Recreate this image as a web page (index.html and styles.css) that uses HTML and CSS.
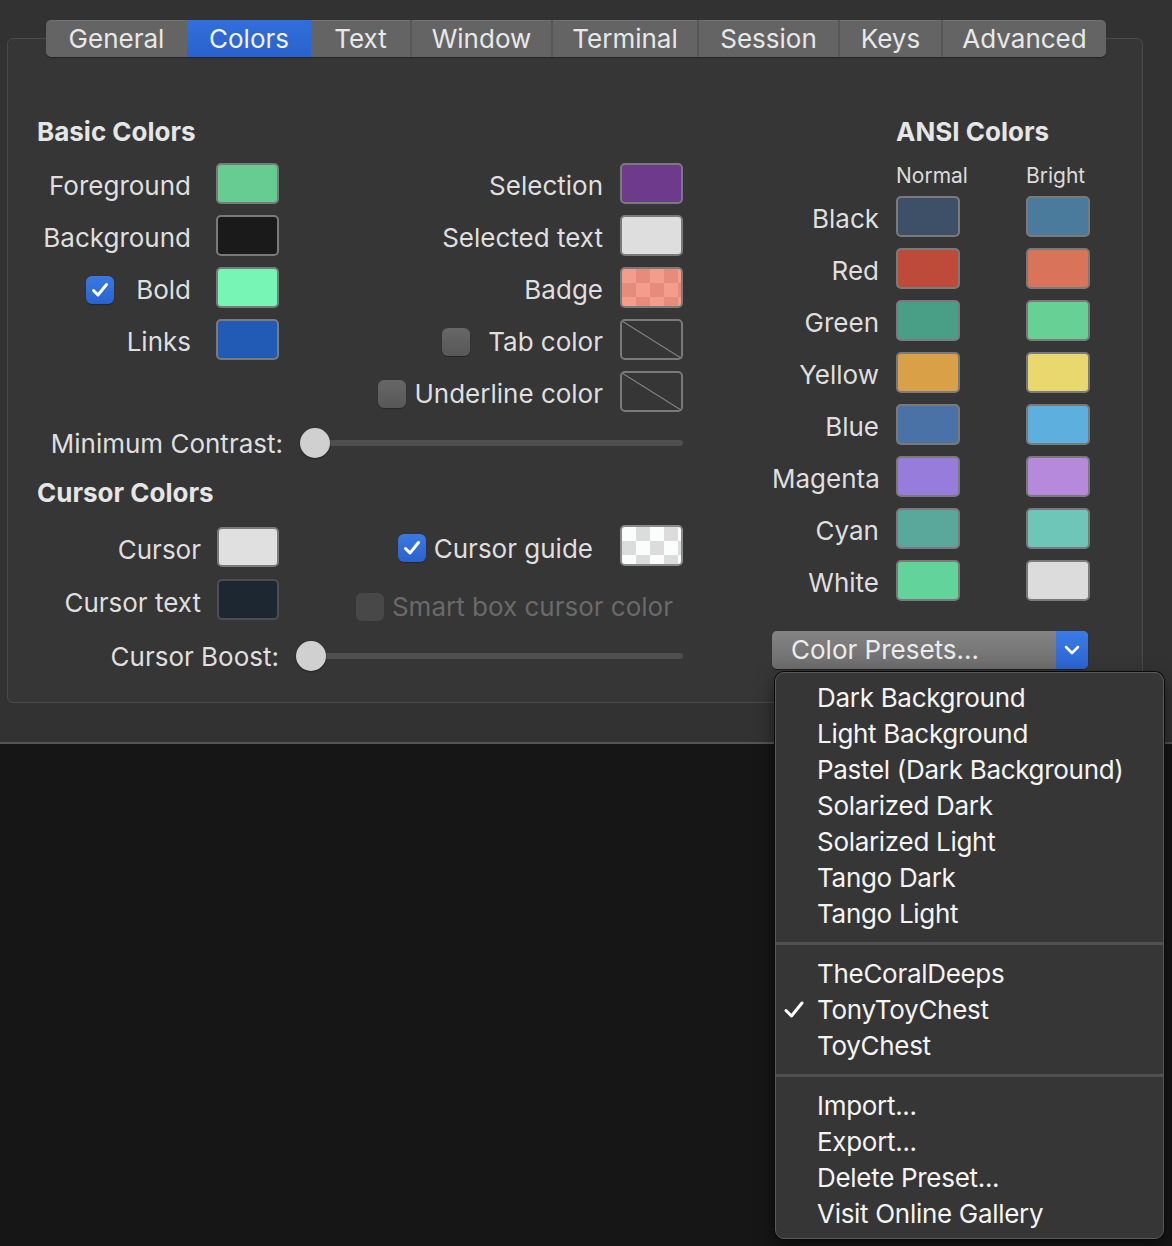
FILE: index.html
```html
<!DOCTYPE html>
<html>
<head>
<meta charset="utf-8">
<link rel="stylesheet" href="styles.css">
</head>
<body>
<div class="window">
  <div class="tabs">
    <div class="tab">General</div>
    <div class="tab active">Colors</div>
    <div class="tab nosep">Text</div>
    <div class="tab">Window</div>
    <div class="tab">Terminal</div>
    <div class="tab">Session</div>
    <div class="tab">Keys</div>
    <div class="tab">Advanced</div>
  </div>
  <div class="panel">
    <div class="left">
      <div class="title">Basic Colors</div>
      <div class="basic-grid">
        <div class="lbl1">Foreground</div><div class="sw c-fg"></div>
        <div class="lbl2">Selection</div><div class="sw c-sel"></div>

        <div class="lbl1">Background</div><div class="sw c-bg"></div>
        <div class="lbl2">Selected text</div><div class="sw c-seltext"></div>

        <div class="lbl1 withbox"><span class="cb on"><svg viewBox="0 0 28 28"><path d="M7.5 14.5 L12 19 L20.5 8.5" fill="none" stroke="#fff" stroke-width="3" stroke-linecap="round" stroke-linejoin="round"/></svg></span><span>Bold</span></div><div class="sw c-bold"></div>
        <div class="lbl2">Badge</div><div class="sw c-badge"></div>

        <div class="lbl1">Links</div><div class="sw c-links"></div>
        <div class="lbl2 withbox gap-tab"><span class="cb"></span><span>Tab color</span></div><div class="sw none"></div>

        <div class="lbl1"></div><div></div>
        <div class="lbl2 withbox gap-ul"><span class="cb"></span><span>Underline color</span></div><div class="sw none"></div>
      </div>
      <div class="slider-row contrast">
        <div class="slabel">Minimum Contrast:</div>
        <div class="slider"><span class="knob"></span><span class="track"></span></div>
      </div>
      <div class="title second">Cursor Colors</div>
      <div class="cursor-grid">
        <div class="lbl1">Cursor</div><div class="sw c-cursor"></div>
        <div class="right-cell"><span class="cb on"><svg viewBox="0 0 28 28"><path d="M7.5 14.5 L12 19 L20.5 8.5" fill="none" stroke="#fff" stroke-width="3" stroke-linecap="round" stroke-linejoin="round"/></svg></span><span class="guide-label">Cursor guide</span><span class="sw c-guide"></span></div>
        <div class="lbl1">Cursor text</div><div class="sw c-ctext"></div>
        <div class="right-cell smart"><span class="cb dis"></span><span>Smart box cursor color</span></div>
      </div>
      <div class="slider-row boost">
        <div class="slabel">Cursor Boost:</div>
        <div class="slider"><span class="knob"></span><span class="track"></span></div>
      </div>
    </div>
    <div class="right">
      <div class="ansi-grid">
        <div class="atitle">ANSI Colors</div>
        <div class="sub n">Normal</div>
        <div class="sub b">Bright</div>

        <div class="alabel">Black</div><div class="sw a1 k0"></div><div class="sw a2 k8"></div>
        <div class="alabel">Red</div><div class="sw a1 k1"></div><div class="sw a2 k9"></div>
        <div class="alabel">Green</div><div class="sw a1 k2"></div><div class="sw a2 k10"></div>
        <div class="alabel">Yellow</div><div class="sw a1 k3"></div><div class="sw a2 k11"></div>
        <div class="alabel">Blue</div><div class="sw a1 k4"></div><div class="sw a2 k12"></div>
        <div class="alabel">Magenta</div><div class="sw a1 k5"></div><div class="sw a2 k13"></div>
        <div class="alabel">Cyan</div><div class="sw a1 k6"></div><div class="sw a2 k14"></div>
        <div class="alabel">White</div><div class="sw a1 k7"></div><div class="sw a2 k15"></div>
      </div>
      <div class="popup">
        <span class="popup-text">Color Presets...</span>
        <span class="popup-arrow"><svg viewBox="0 0 32 38" width="32" height="38"><path d="M10 16 L16 22 L22 16" fill="none" stroke="#fff" stroke-width="2.6" stroke-linecap="round" stroke-linejoin="round"/></svg></span>
      </div>
    </div>
  </div>
</div>
<div class="menu">
  <div class="item">Dark Background</div>
  <div class="item">Light Background</div>
  <div class="item">Pastel (Dark Background)</div>
  <div class="item">Solarized Dark</div>
  <div class="item">Solarized Light</div>
  <div class="item">Tango Dark</div>
  <div class="item">Tango Light</div>
  <div class="sep"></div>
  <div class="item">TheCoralDeeps</div>
  <div class="item checked"><span class="check"><svg viewBox="0 0 22 22" width="22" height="22"><path d="M3 11.5 L8.5 17 L19 4" fill="none" stroke="#fff" stroke-width="3" stroke-linecap="round" stroke-linejoin="round"/></svg></span>TonyToyChest</div>
  <div class="item">ToyChest</div>
  <div class="sep"></div>
  <div class="item">Import...</div>
  <div class="item">Export...</div>
  <div class="item">Delete Preset...</div>
  <div class="item">Visit Online Gallery</div>
</div>
</body>
</html>
```
FILE: styles.css
```css
* { box-sizing: border-box; }
html, body { margin: 0; padding: 0; }
body {
  width: 1172px;
  height: 1246px;
  background: #161616;
  font-family: Inter, "Noto Sans", "Liberation Sans", sans-serif;
  font-size: 26px;
  color: #dfdfdf;
  overflow: hidden;
  position: relative;
}
.window {
  height: 744px;
  background: #323232;
  border-bottom: 2px solid #555;
  padding-top: 20px;
}
.tabs {
  position: relative;
  z-index: 2;
  margin-left: 46px;
  width: 1060px;
  height: 37px;
  display: grid;
  grid-template-columns: 141px 124px 99px 141px 146px 141px 103px 165px;
  background: #646464;
  border-radius: 5px;
  box-shadow: 0 1px 1px rgba(0,0,0,0.35), inset 0 1px 0 rgba(255,255,255,0.08);
  overflow: hidden;
}
.tab {
  text-align: center;
  line-height: 37px;
  color: #e8e8e8;
  border-left: 2px solid #575757;
}
.tab:first-child, .tab.nosep, .tab.active { border-left: none; }
.tab.active {
  background: linear-gradient(#316fdc, #2a62cc);
  color: #f2f2f2;
}
.panel {
  margin-left: 7px;
  margin-top: -19px;
  width: 1136px;
  height: 665px;
  border: 1px solid #4a4a4a;
  border-radius: 6px;
  background: #363636;
  display: flex;
  padding: 78px 0 0 29px;
}
.left { width: 646px; }
.title {
  font-weight: 700;
  line-height: 30px;
  height: 30px;
  color: #e6e6e6;
}
.title.second { margin-top: 9px; }
.basic-grid {
  margin-top: 10px;
  display: grid;
  grid-template-columns: 179px 63px 341px 63px;
  grid-auto-rows: 52px;
  align-items: center;
}
.lbl1, .lbl2, .alabel, .right-cell { padding-top: 5px; }
.lbl1 { text-align: right; padding-right: 25px; white-space: nowrap; }
.lbl2 { text-align: right; padding-right: 17px; white-space: nowrap; }
.withbox { display: flex; justify-content: flex-end; align-items: center; gap: 22px; }
.gap-tab { gap: 18px; }
.gap-ul { gap: 8px; }
.sw {
  display: block;
  width: 63px;
  height: 41px;
  border: 2px solid #7a7a7a;
  border-radius: 5px;
}
.c-fg { background: #66cc92; }
.c-bg { background: #1a1a1a; }
.c-bold { background: #76f5b4; }
.c-links { background: #215bb5; }
.c-sel { background: #6e3a8c; }
.c-seltext { background: #dedede; }
.c-badge {
  background-color: #f49d8d;
  background-image:
    linear-gradient(45deg, #e78b7d 25%, transparent 25%, transparent 75%, #e78b7d 75%),
    linear-gradient(45deg, #e78b7d 25%, transparent 25%, transparent 75%, #e78b7d 75%);
  background-size: 28px 28px;
  background-position: 0 0, 14px 14px;
}
.sw.none {
  background: linear-gradient(to top right, transparent calc(50% - 1px), #8a8a8a 50%, transparent calc(50% + 1px));
}
.c-cursor { background: #e0e0e0; height: 40px; }
.c-ctext { background: #1d2731; border-color: #4d4d4d; }
.c-guide {
  background-color: #fbfdfd;
  background-image:
    linear-gradient(45deg, #dcdcdc 25%, transparent 25%, transparent 75%, #dcdcdc 75%),
    linear-gradient(45deg, #dcdcdc 25%, transparent 25%, transparent 75%, #dcdcdc 75%);
  background-size: 28px 28px;
  background-position: 0 0, 14px 14px;
  border-color: #8a8a8a;
}
.cb {
  width: 28px;
  height: 28px;
  border-radius: 6px;
  background: linear-gradient(#676767, #575757);
  box-shadow: 0 1px 1px rgba(0,0,0,0.3);
  display: inline-block;
  flex: none;
}
.cb svg { width: 28px; height: 28px; display: block; }
.cb.on { background: linear-gradient(#3a79e2, #2a62cc); }
.cb.dis { background: #484848; box-shadow: none; }

.slider-row { display: flex; align-items: center; height: 46px; }
.contrast { height: 52px; }
.slabel { text-align: right; white-space: nowrap; padding-top: 1px; }
.contrast .slabel { width: 246px; }
.contrast .slider { margin-left: 17px; width: 383px; }
.boost { margin-top: 7px; }
.boost .slabel { width: 242px; }
.boost .slider { margin-left: 17px; width: 387px; }
.slider { display: flex; align-items: center; height: 30px; }
.knob {
  width: 30px; height: 30px; border-radius: 50%;
  background: #d0d0d0;
  box-shadow: 0 1px 2px rgba(0,0,0,0.4);
  flex: none;
  position: relative;
  z-index: 1;
}
.track {
  flex: 1;
  height: 6px;
  margin-left: -15px;
  background: #4f4f4f;
  border-radius: 3px;
}
.cursor-grid {
  margin-top: 12px;
  display: grid;
  grid-template-columns: 180px 62px 404px;
  grid-auto-rows: 53px;
  align-items: center;
}
.cursor-grid .lbl1 { padding-right: 16px; }
.cursor-grid .sw { width: 62px; }
.right-cell { display: flex; justify-content: flex-end; align-items: center; gap: 8px; padding-top: 3px; }
.right-cell .sw { margin-top: -5px; }
.guide-label { margin-right: 19px; }
.c-guide { width: 63px !important; }
.smart { padding-right: 10px; color: #6a6a6a; padding-top: 14px; }

.right { margin-left: 89px; width: 318px; }
.ansi-grid {
  display: grid;
  grid-template-columns: 107px 64px 32px 64px;
  column-gap: 17px;
  grid-template-rows: 30px 43px;
  grid-auto-rows: 52px;
  align-items: center;
}
.atitle { grid-column: 2 / 5; font-weight: 700; color: #e6e6e6; white-space: nowrap; line-height: 30px; }
.sub { font-size: 21px; align-self: end; padding-bottom: 2px; color: #dcdcdc; }
.sub.n { grid-column: 2; }
.sub.b { grid-column: 4; }
.alabel { grid-column: 1; text-align: right; }
.sw.a1 { grid-column: 2; width: 64px; }
.sw.a2 { grid-column: 4; width: 64px; }
.k0 { background: #3d5068; } .k8 { background: #4a7a9c; }
.k1 { background: #be4b39; } .k9 { background: #d9735a; }
.k2 { background: #489f85; } .k10 { background: #67d095; }
.k3 { background: #d9a048; } .k11 { background: #e8d86e; }
.k4 { background: #4a72a6; } .k12 { background: #5db0dd; }
.k5 { background: #977cdc; } .k13 { background: #b689dc; }
.k6 { background: #5aa89c; } .k14 { background: #6ec6b8; }
.k7 { background: #62d49b; } .k15 { background: #dcdcdc; }

.popup {
  margin-top: 25px;
  width: 316px;
  height: 38px;
  display: flex;
  border-radius: 5px;
  overflow: hidden;
  background: linear-gradient(#848484, #6c6c6c);
  box-shadow: 0 1px 1px rgba(0,0,0,0.4);
}
.popup-text { flex: 1; padding-left: 19px; line-height: 38px; color: #ececec; }
.popup-arrow { width: 32px; background: linear-gradient(#3a7be4, #2c65d2); display: block; }
.popup-arrow svg { display: block; }

.menu {
  position: absolute;
  left: 775px;
  top: 672px;
  width: 389px;
  height: 567px;
  background: #363636;
  border: 1px solid #5a5a5a;
  border-radius: 9px;
  box-shadow: 0 0 0 1px #0a0a0a, 0 8px 20px rgba(0,0,0,0.5);
  padding-top: 7px;
  color: #f4f4f4;
  letter-spacing: -0.3px;
}
.item {
  height: 36px;
  line-height: 36px;
  padding-left: 41px;
  position: relative;
  white-space: nowrap;
}
.check { position: absolute; left: 7px; top: 7px; width: 22px; height: 22px; }
.check svg { display: block; }
.sep {
  height: 24px;
  position: relative;
}
.sep::after {
  content: "";
  position: absolute;
  left: 0; right: 0;
  top: 10px;
  height: 3px;
  background: #505050;
}
```
